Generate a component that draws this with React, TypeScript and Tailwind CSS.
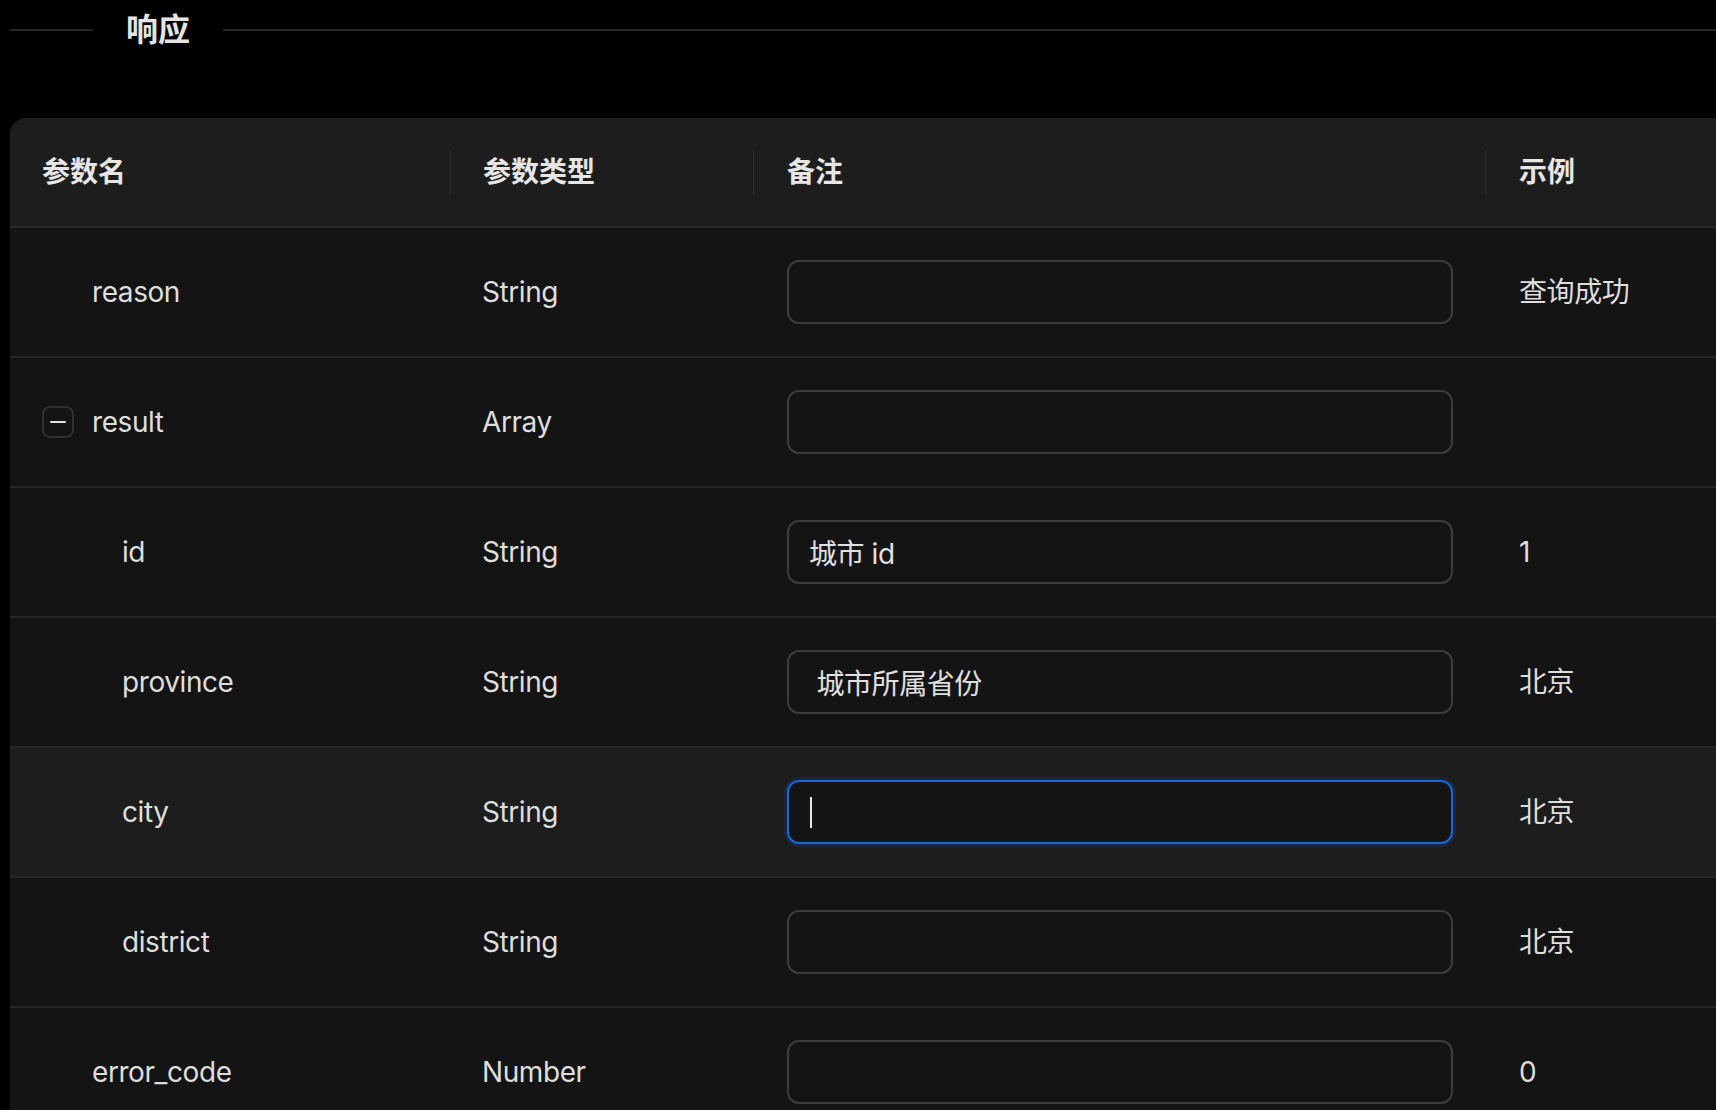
import React from "react";

type Row = {
  name: string;
  type: string;
  note: string;
  example: string;
  level: number;
  expandable?: boolean;
  focused?: boolean;
};

const rows: Row[] = [
  { name: "reason", type: "String", note: "", example: "查询成功", level: 0 },
  { name: "result", type: "Array", note: "", example: "", level: 0, expandable: true },
  { name: "id", type: "String", note: "城市 id", example: "1", level: 1 },
  { name: "province", type: "String", note: " 城市所属省份", example: "北京", level: 1 },
  { name: "city", type: "String", note: "", example: "北京", level: 1, focused: true },
  { name: "district", type: "String", note: "", example: "北京", level: 1 },
  { name: "error_code", type: "Number", note: "", example: "0", level: 0 },
];

const FONT = 'Inter, "Noto Sans CJK SC", "Noto Sans", sans-serif';

function MinusButton() {
  return (
    <button
      type="button"
      className="w-[32px] h-[32px] shrink-0 rounded-[8px] border-2 border-[#303030] bg-[#141414] flex items-center justify-center"
    >
      <span className="block w-[16px] h-[2px] bg-[#e0e0e0] rounded-full" />
    </button>
  );
}

export default function App() {
  return (
    <div
      className="w-[1716px] h-[1110px] overflow-hidden bg-black text-[#dedede]"
      style={{ fontFamily: FONT }}
    >
      {/* Divider title */}
      <div className="flex items-center h-[60px] pl-[10px]">
        <div className="w-[83px] h-[2px] bg-[#262626]" />
        <div className="mx-[33px] text-[32px] leading-none font-bold text-[#e4e4e4]">响应</div>
        <div className="flex-1 h-[2px] bg-[#262626]" />
      </div>

      {/* Table */}
      <div className="mt-[58px] ml-[10px] w-[1800px] rounded-t-[16px] overflow-hidden bg-[#141414]">
        {/* Header */}
        <div className="flex items-center h-[110px] bg-[#1d1d1d] border-b-2 border-[#2a2a2a] text-[28px] font-bold text-[#e6e6e6]">
          <div className="w-[440px] pl-8">参数名</div>
          <div className="w-px h-[45px] bg-[#303030]" />
          <div className="w-[302px] pl-8">参数类型</div>
          <div className="w-px h-[45px] bg-[#303030]" />
          <div className="w-[731px] pl-[33px]">备注</div>
          <div className="w-px h-[45px] bg-[#303030]" />
          <div className="flex-1 pl-[33px]">示例</div>
        </div>

        {/* Body */}
        {rows.map((r) => (
          <div
            key={r.name}
            className={
              "flex items-center h-[130px] border-b-2 border-[#262626] text-[28px] tracking-[-0.015em] " +
              (r.focused ? "bg-[#1d1d1d]" : "bg-[#141414]")
            }
          >
            <div className="w-[440px] pl-8 flex items-center">
              {r.level > 0 && <div className="w-[30px] shrink-0" />}
              {r.expandable ? <MinusButton /> : <div className="w-[32px] shrink-0" />}
              <span className="ml-[18px]">{r.name}</span>
            </div>
            <div className="w-[303px] pl-8">{r.type}</div>
            <div className="w-[732px] pl-[34px]">
              {r.focused ? (
                <div className="w-[666px] h-[64px] rounded-[12px] border-2 border-[#1668dc] bg-[#141414] shadow-[0_0_0_3px_rgba(22,104,220,0.15)] flex items-center pl-[21px]">
                  <span className="block w-[2px] h-[31px] bg-[#e6e6e6]" />
                </div>
              ) : (
                <input
                  readOnly
                  value={r.note}
                  className="w-[666px] h-[64px] rounded-[12px] border-2 border-[#3c3c3c] bg-[#141414] px-[20px] text-[28px] tracking-[-0.015em] text-[#e0e0e0] outline-none"
                  style={{ fontFamily: FONT }}
                />
              )}
            </div>
            <div className="flex-1 pl-[34px]">{r.example}</div>
          </div>
        ))}
      </div>
    </div>
  );
}
